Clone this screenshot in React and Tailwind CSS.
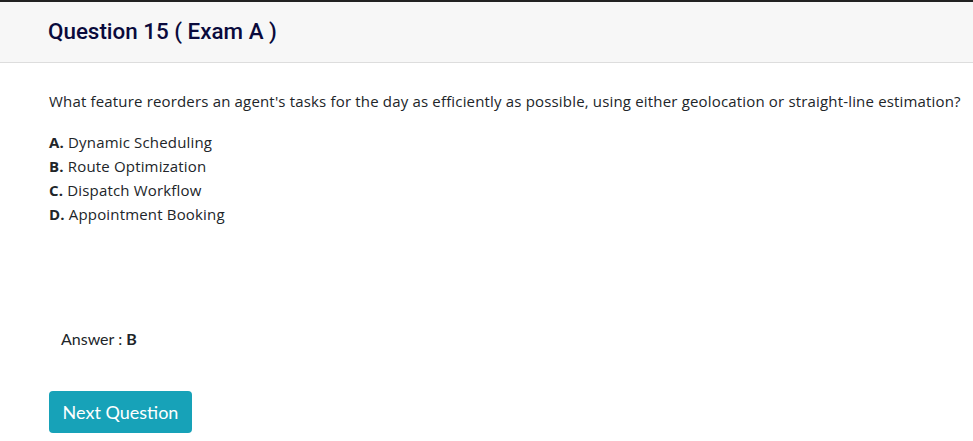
export default function App() {
  const options = [
    ["A.", "Dynamic Scheduling"],
    ["B.", "Route Optimization"],
    ["C.", "Dispatch Workflow"],
    ["D.", "Appointment Booking"],
  ];

  return (
    <div className="w-[973px] h-[441px] overflow-hidden bg-white border-t-2 border-[#222]">
      <div className="h-[61px] bg-[#f7f7f7] border-b border-[#dddddd] flex items-center px-[48px]">
        <h1 className="text-[22.4px] font-medium text-[#0a0a3c] font-['Roboto',sans-serif]">
          Question 15 ( Exam A )
        </h1>
      </div>

      <div className="pl-[49px] pr-[8px] pt-[26px] font-['Open_Sans',sans-serif] text-[15px] tracking-[0.17px] text-[#212529]">
        <p className="leading-[24px] whitespace-nowrap">
          What feature reorders an agent's tasks for the day as efficiently as possible, using either geolocation or straight-line estimation?
        </p>

        <ul className="mt-[17px] leading-[24px]">
          {options.map(([letter, text]) => (
            <li key={letter}>
              <b className="font-bold">{letter}</b> {text}
            </li>
          ))}
        </ul>

        <div className="mt-[101px] pl-[12px] font-['Lato',sans-serif] text-[16px] tracking-normal leading-[24px]">
          Answer : <b>B</b>
        </div>

        <button className="mt-[40px] h-[42px] w-[143px] rounded-[4px] bg-[#17a2b8] text-white text-[18px] tracking-normal font-['Lato',sans-serif]">
          Next Question
        </button>
      </div>
    </div>
  );
}
